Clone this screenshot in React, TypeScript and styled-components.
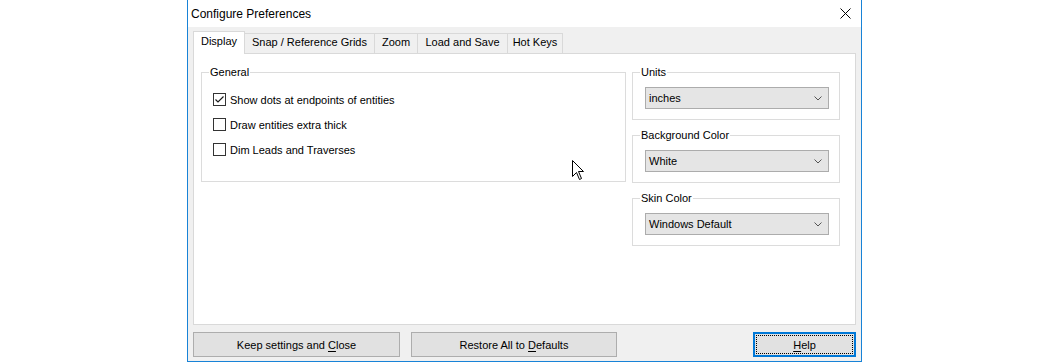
import styled, { createGlobalStyle } from "styled-components";

const GlobalStyle = createGlobalStyle`
  html, body {
    margin: 0;
    background: #ffffff;
  }
  body {
    font-family: "Liberation Sans", Arial, sans-serif;
    font-size: 11px;
    color: #000000;
  }
`;

const Window = styled.div`
  position: relative;
  box-sizing: border-box;
  width: 675px;
  height: 362px;
  margin-left: 187px;
  border: 1px solid #1883d7;
  border-top: none;
  display: flex;
  flex-direction: column;
`;

const TitleBar = styled.div`
  height: 27px;
  flex-shrink: 0;
  background: #ffffff;
  display: flex;
  align-items: center;
  justify-content: space-between;
  padding: 0 10px 0 3px;
  font-size: 12px;
`;

const Body = styled.div`
  flex: 1;
  background: #f0f0f0;
  padding: 4px 5px 4px 5px;
  display: flex;
  flex-direction: column;
`;

const TabStrip = styled.div`
  height: 22px;
  display: flex;
  align-items: flex-end;
`;

const Tab = styled.div<{ $w: number; $active?: boolean }>`
  box-sizing: border-box;
  width: ${(p) => p.$w}px;
  height: ${(p) => (p.$active ? 23 : 20)}px;
  margin-left: -1px;
  margin-bottom: ${(p) => (p.$active ? -1 : 0)}px;
  position: relative;
  z-index: ${(p) => (p.$active ? 1 : 0)};
  border: 1px solid #d9d9d9;
  border-bottom: none;
  background: ${(p) => (p.$active ? "#ffffff" : "#f0f0f0")};
  display: flex;
  justify-content: center;
  padding-top: ${(p) => (p.$active ? 3 : 2)}px;
  white-space: nowrap;

  &:first-child {
    margin-left: 0;
  }
`;

const Page = styled.div`
  box-sizing: border-box;
  height: 272px;
  border: 1px solid #d9d9d9;
  background: #ffffff;
  padding: 11px 15px 0 7px;
  display: flex;
  align-items: flex-start;
  gap: 6px;
`;

const Group = styled.fieldset<{ $h?: number; $pl: number }>`
  box-sizing: border-box;
  margin: 0;
  min-width: 0;
  border: 1px solid #dcdcdc;
  padding: 8px 10px 10px ${(p) => p.$pl}px;
  ${(p) => (p.$h ? `height: ${p.$h}px;` : "")}
`;

const Legend = styled.legend<{ $ml: number }>`
  padding: 0 1px;
  margin-left: ${(p) => p.$ml}px;
  line-height: 14px;
  height: 14px;
`;

const GeneralCol = styled.div`
  width: 425px;
`;

const SideCol = styled.div`
  width: 208px;
  display: flex;
  flex-direction: column;
  gap: 8px;
`;

const CheckList = styled.div`
  display: flex;
  flex-direction: column;
  gap: 8px;
  padding-top: 4px;
`;

const CheckRow = styled.label`
  height: 17px;
  display: flex;
  align-items: center;
  gap: 3px;
`;

const Box = styled.span`
  box-sizing: border-box;
  width: 13px;
  height: 13px;
  border: 1px solid #333333;
  background: #ffffff;
  display: inline-flex;
  align-items: center;
  justify-content: center;
  margin-right: 1px;
`;

const Combo = styled.div`
  box-sizing: border-box;
  height: 22px;
  background: #e5e5e5;
  border: 1px solid #acacac;
  padding: 0 6px 0 3px;
  display: flex;
  align-items: center;
  justify-content: space-between;
`;

const Footer = styled.div`
  margin-top: 7px;
  display: flex;
  gap: 11px;
`;

const Button = styled.div<{ $w: number; $default?: boolean }>`
  box-sizing: border-box;
  position: relative;
  width: ${(p) => p.$w}px;
  height: 25px;
  background: #e1e1e1;
  border: ${(p) => (p.$default ? "2px solid #0078d7" : "1px solid #adadad")};
  display: flex;
  align-items: center;
  justify-content: center;
  ${(p) => (p.$default ? "margin-left: auto;" : "")}

  &::after {
    content: "";
    display: ${(p) => (p.$default ? "block" : "none")};
    position: absolute;
    inset: 1px;
    border: 1px dotted #000000;
  }

  u {
    text-decoration-thickness: 1px;
    text-underline-offset: 2px;
  }
`;

const Pointer = styled.svg`
  position: absolute;
  left: 384px;
  top: 160px;
`;

const Check = ({ checked, label }: { checked?: boolean; label: string }) => (
  <CheckRow>
    <Box>
      {checked && (
        <svg width="11" height="11" viewBox="0 0 11 11">
          <path d="M1.5 5.5 L4 8 L9.5 2.5" fill="none" stroke="#1a1a1a" strokeWidth="1.2" />
        </svg>
      )}
    </Box>
    {label}
  </CheckRow>
);

const Select = ({ value }: { value: string }) => (
  <Combo>
    <span>{value}</span>
    <svg width="8" height="5" viewBox="0 0 8 5">
      <path d="M0.5 0.5 L4 4 L7.5 0.5" fill="none" stroke="#555555" strokeWidth="1" />
    </svg>
  </Combo>
);

const tabs = [
  { label: "Display", w: 52, active: true },
  { label: "Snap / Reference Grids", w: 131 },
  { label: "Zoom", w: 44 },
  { label: "Load and Save", w: 91 },
  { label: "Hot Keys", w: 56 },
];

export default function App() {
  return (
    <>
      <GlobalStyle />
      <Window>
        <TitleBar>
          <span>Configure Preferences</span>
          <svg width="11" height="11" viewBox="0 0 11 11">
            <path d="M0.5 0.5 L10.5 10.5 M10.5 0.5 L0.5 10.5" stroke="#000000" strokeWidth="1" />
          </svg>
        </TitleBar>
        <Body>
          <TabStrip>
            {tabs.map((t) => (
              <Tab key={t.label} $w={t.w} $active={t.active}>
                {t.label}
              </Tab>
            ))}
          </TabStrip>
          <Page>
            <GeneralCol>
              <Group $h={117} $pl={11}>
                <Legend $ml={-4}>General</Legend>
                <CheckList>
                  <Check checked label="Show dots at endpoints of entities" />
                  <Check label="Draw entities extra thick" />
                  <Check label="Dim Leads and Traverses" />
                </CheckList>
              </Group>
            </GeneralCol>
            <SideCol>
              <Group $pl={12}>
                <Legend $ml={-5}>Units</Legend>
                <Select value="inches" />
              </Group>
              <Group $pl={12}>
                <Legend $ml={-5}>Background Color</Legend>
                <Select value="White" />
              </Group>
              <Group $pl={12}>
                <Legend $ml={-5}>Skin Color</Legend>
                <Select value="Windows Default" />
              </Group>
            </SideCol>
          </Page>
          <Footer>
            <Button $w={207}>
              <span>
                Keep settings and <u>C</u>lose
              </span>
            </Button>
            <Button $w={206}>
              <span>
                Restore All to <u>D</u>efaults
              </span>
            </Button>
            <Button $w={103} $default>
              <span>
                <u>H</u>elp
              </span>
            </Button>
          </Footer>
        </Body>
        <Pointer width="13" height="21" viewBox="0 0 13 21">
          <path
            d="M0.5 0.5 L0.5 16.5 L4.5 12.5 L7.5 19.5 L9.5 18.5 L6.5 11.5 L11.5 11.5 Z"
            fill="#ffffff"
            stroke="#000000"
            strokeWidth="1"
            strokeLinejoin="round"
          />
        </Pointer>
      </Window>
    </>
  );
}
